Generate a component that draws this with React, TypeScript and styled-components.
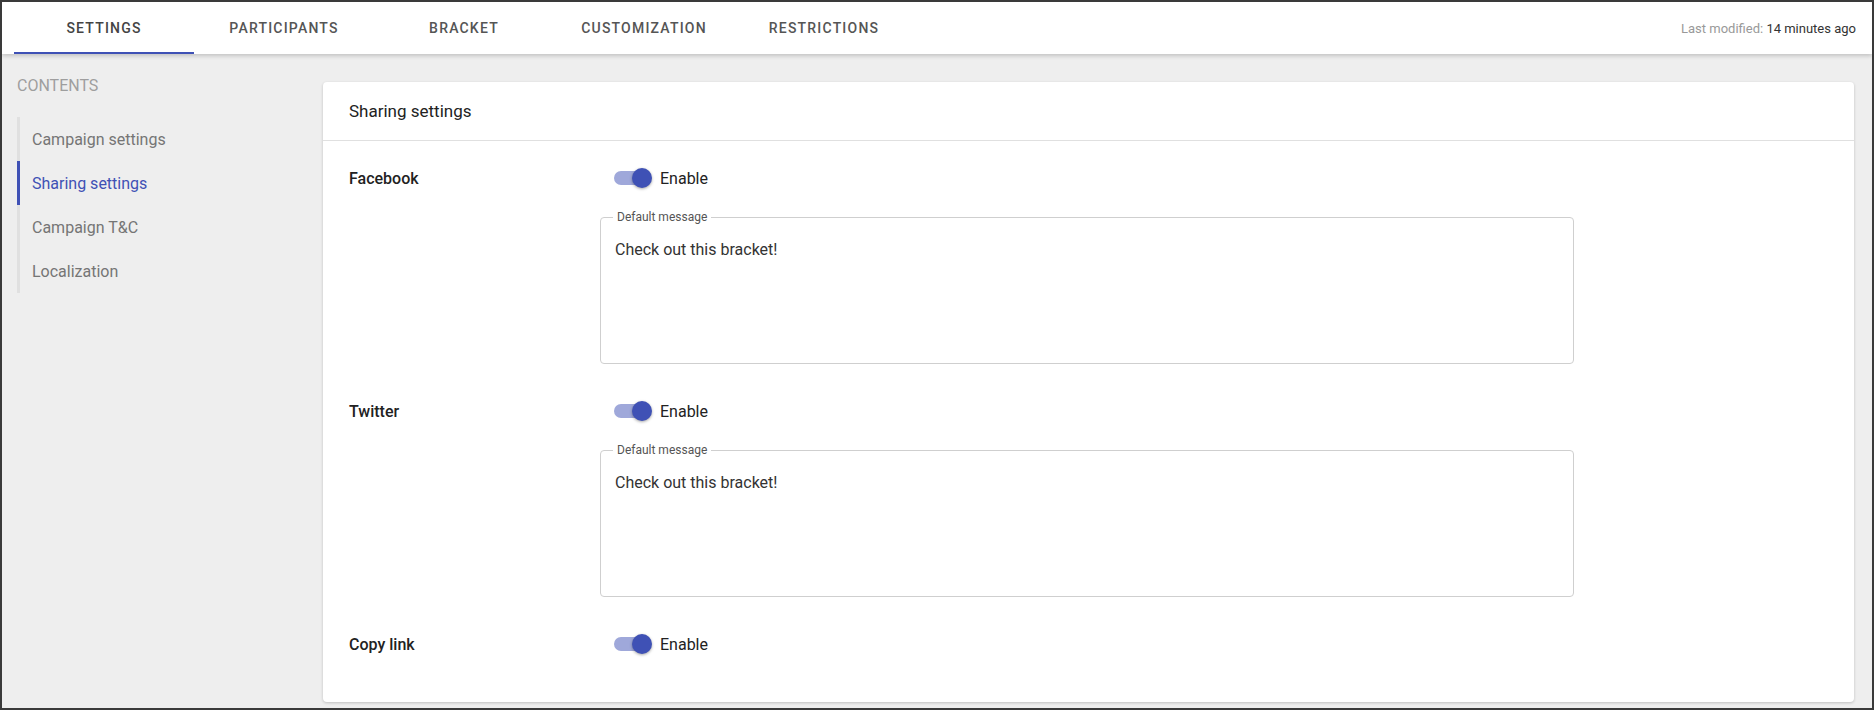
import styled, { createGlobalStyle } from "styled-components";

const Global = createGlobalStyle`
  html, body { margin: 0; padding: 0; }
  body { font-family: Roboto, "Noto Sans", sans-serif; background: #fff; }
  * { box-sizing: border-box; }
`;

const Frame = styled.div`
  width: 1874px;
  height: 710px;
  border: 2px solid #3a3a3a;
  background: #eeeeee;
  display: flex;
  flex-direction: column;
  overflow: hidden;
`;

const TopBar = styled.div`
  height: 52px;
  background: #fff;
  display: flex;
  align-items: stretch;
  padding: 0 16px 0 12px;
  box-shadow: 0 2px 4px rgba(0, 0, 0, 0.18);
  position: relative;
  z-index: 1;
`;

const Tab = styled.div<{ $active?: boolean }>`
  width: 180px;
  display: flex;
  align-items: center;
  justify-content: center;
  font-size: 14px;
  font-weight: 500;
  letter-spacing: 1.2px;
  color: ${(p) => (p.$active ? "#444" : "#555")};
  border-bottom: 2px solid ${(p) => (p.$active ? "#3f51b5" : "transparent")};
  padding-top: 2px;
`;

const Modified = styled.div`
  margin-left: auto;
  align-self: center;
  font-size: 13px;
  color: #999;
  span { color: #333; }
`;

const Body = styled.div`
  flex: 1;
  display: flex;
  padding-top: 28px;
`;

const Sidebar = styled.nav`
  width: 321px;
  padding-left: 15px;
`;

const ContentsTitle = styled.div`
  font-size: 16px;
  color: #9e9e9e;
  margin-top: -6px;
  margin-bottom: 22px;
`;

const NavList = styled.div`
  border-left: 3px solid #e0e0e0;
`;

const NavItem = styled.div<{ $active?: boolean }>`
  height: 44px;
  display: flex;
  align-items: center;
  padding-left: 12px;
  margin-left: -3px;
  border-left: 3px solid ${(p) => (p.$active ? "#3f51b5" : "transparent")};
  font-size: 16px;
  color: ${(p) => (p.$active ? "#3f51b5" : "#757575")};
`;

const Card = styled.section`
  width: 1531px;
  height: 620px;
  background: #fff;
  border-radius: 4px;
  box-shadow: 0 1px 3px rgba(0, 0, 0, 0.2);
`;

const CardHeader = styled.div`
  height: 59px;
  display: flex;
  align-items: center;
  padding-left: 26px;
  font-size: 17px;
  color: #222;
  border-bottom: 1px solid #e0e0e0;
`;

const CardBody = styled.div`
  padding: 28px 26px 0;
  display: flex;
  flex-direction: column;
`;

const Row = styled.div<{ $gap?: number }>`
  display: grid;
  grid-template-columns: 251px 974px;
  margin-bottom: ${(p) => p.$gap ?? 0}px;
`;

const Label = styled.div`
  font-size: 16px;
  font-weight: 500;
  color: #222;
`;

const ToggleLine = styled.label`
  display: flex;
  align-items: center;
  gap: 12px;
  padding-left: 14px;
  height: 24px;
  margin-top: -3px;
  font-size: 16px;
  color: #222;
`;

const Track = styled.span`
  position: relative;
  width: 34px;
  height: 14px;
  border-radius: 7px;
  background: #9fa8da;
`;

const Thumb = styled.span`
  position: absolute;
  right: -4px;
  top: -3px;
  width: 20px;
  height: 20px;
  border-radius: 50%;
  background: #3f51b5;
  box-shadow: 0 1px 3px rgba(0, 0, 0, 0.35);
`;

const Field = styled.fieldset`
  grid-column: 2;
  margin: 20px 0 0;
  height: 154px;
  border: 1px solid #cfcfcf;
  border-radius: 4px;
  padding: 16px 14px;
  font-size: 16px;
  color: #333;
  legend {
    font-size: 12px;
    color: #555;
    padding: 0 4px;
    margin-left: -2px;
  }
`;

function Toggle() {
  return (
    <ToggleLine>
      <Track>
        <Thumb />
      </Track>
      Enable
    </ToggleLine>
  );
}

export default function App() {
  const tabs = ["SETTINGS", "PARTICIPANTS", "BRACKET", "CUSTOMIZATION", "RESTRICTIONS"];
  const nav = ["Campaign settings", "Sharing settings", "Campaign T&C", "Localization"];
  return (
    <>
      <Global />
      <Frame>
        <TopBar>
          {tabs.map((t, i) => (
            <Tab key={t} $active={i === 0}>
              {t}
            </Tab>
          ))}
          <Modified>
            Last modified: <span>14 minutes ago</span>
          </Modified>
        </TopBar>
        <Body>
          <Sidebar>
            <ContentsTitle>CONTENTS</ContentsTitle>
            <NavList>
              {nav.map((n, i) => (
                <NavItem key={n} $active={i === 1}>
                  {n}
                </NavItem>
              ))}
            </NavList>
          </Sidebar>
          <Card>
            <CardHeader>Sharing settings</CardHeader>
            <CardBody>
              <Row $gap={38}>
                <Label>Facebook</Label>
                <Toggle />
                <Field>
                  <legend>Default message</legend>
                  Check out this bracket!
                </Field>
              </Row>
              <Row $gap={38}>
                <Label>Twitter</Label>
                <Toggle />
                <Field>
                  <legend>Default message</legend>
                  Check out this bracket!
                </Field>
              </Row>
              <Row>
                <Label>Copy link</Label>
                <Toggle />
              </Row>
            </CardBody>
          </Card>
        </Body>
      </Frame>
    </>
  );
}
